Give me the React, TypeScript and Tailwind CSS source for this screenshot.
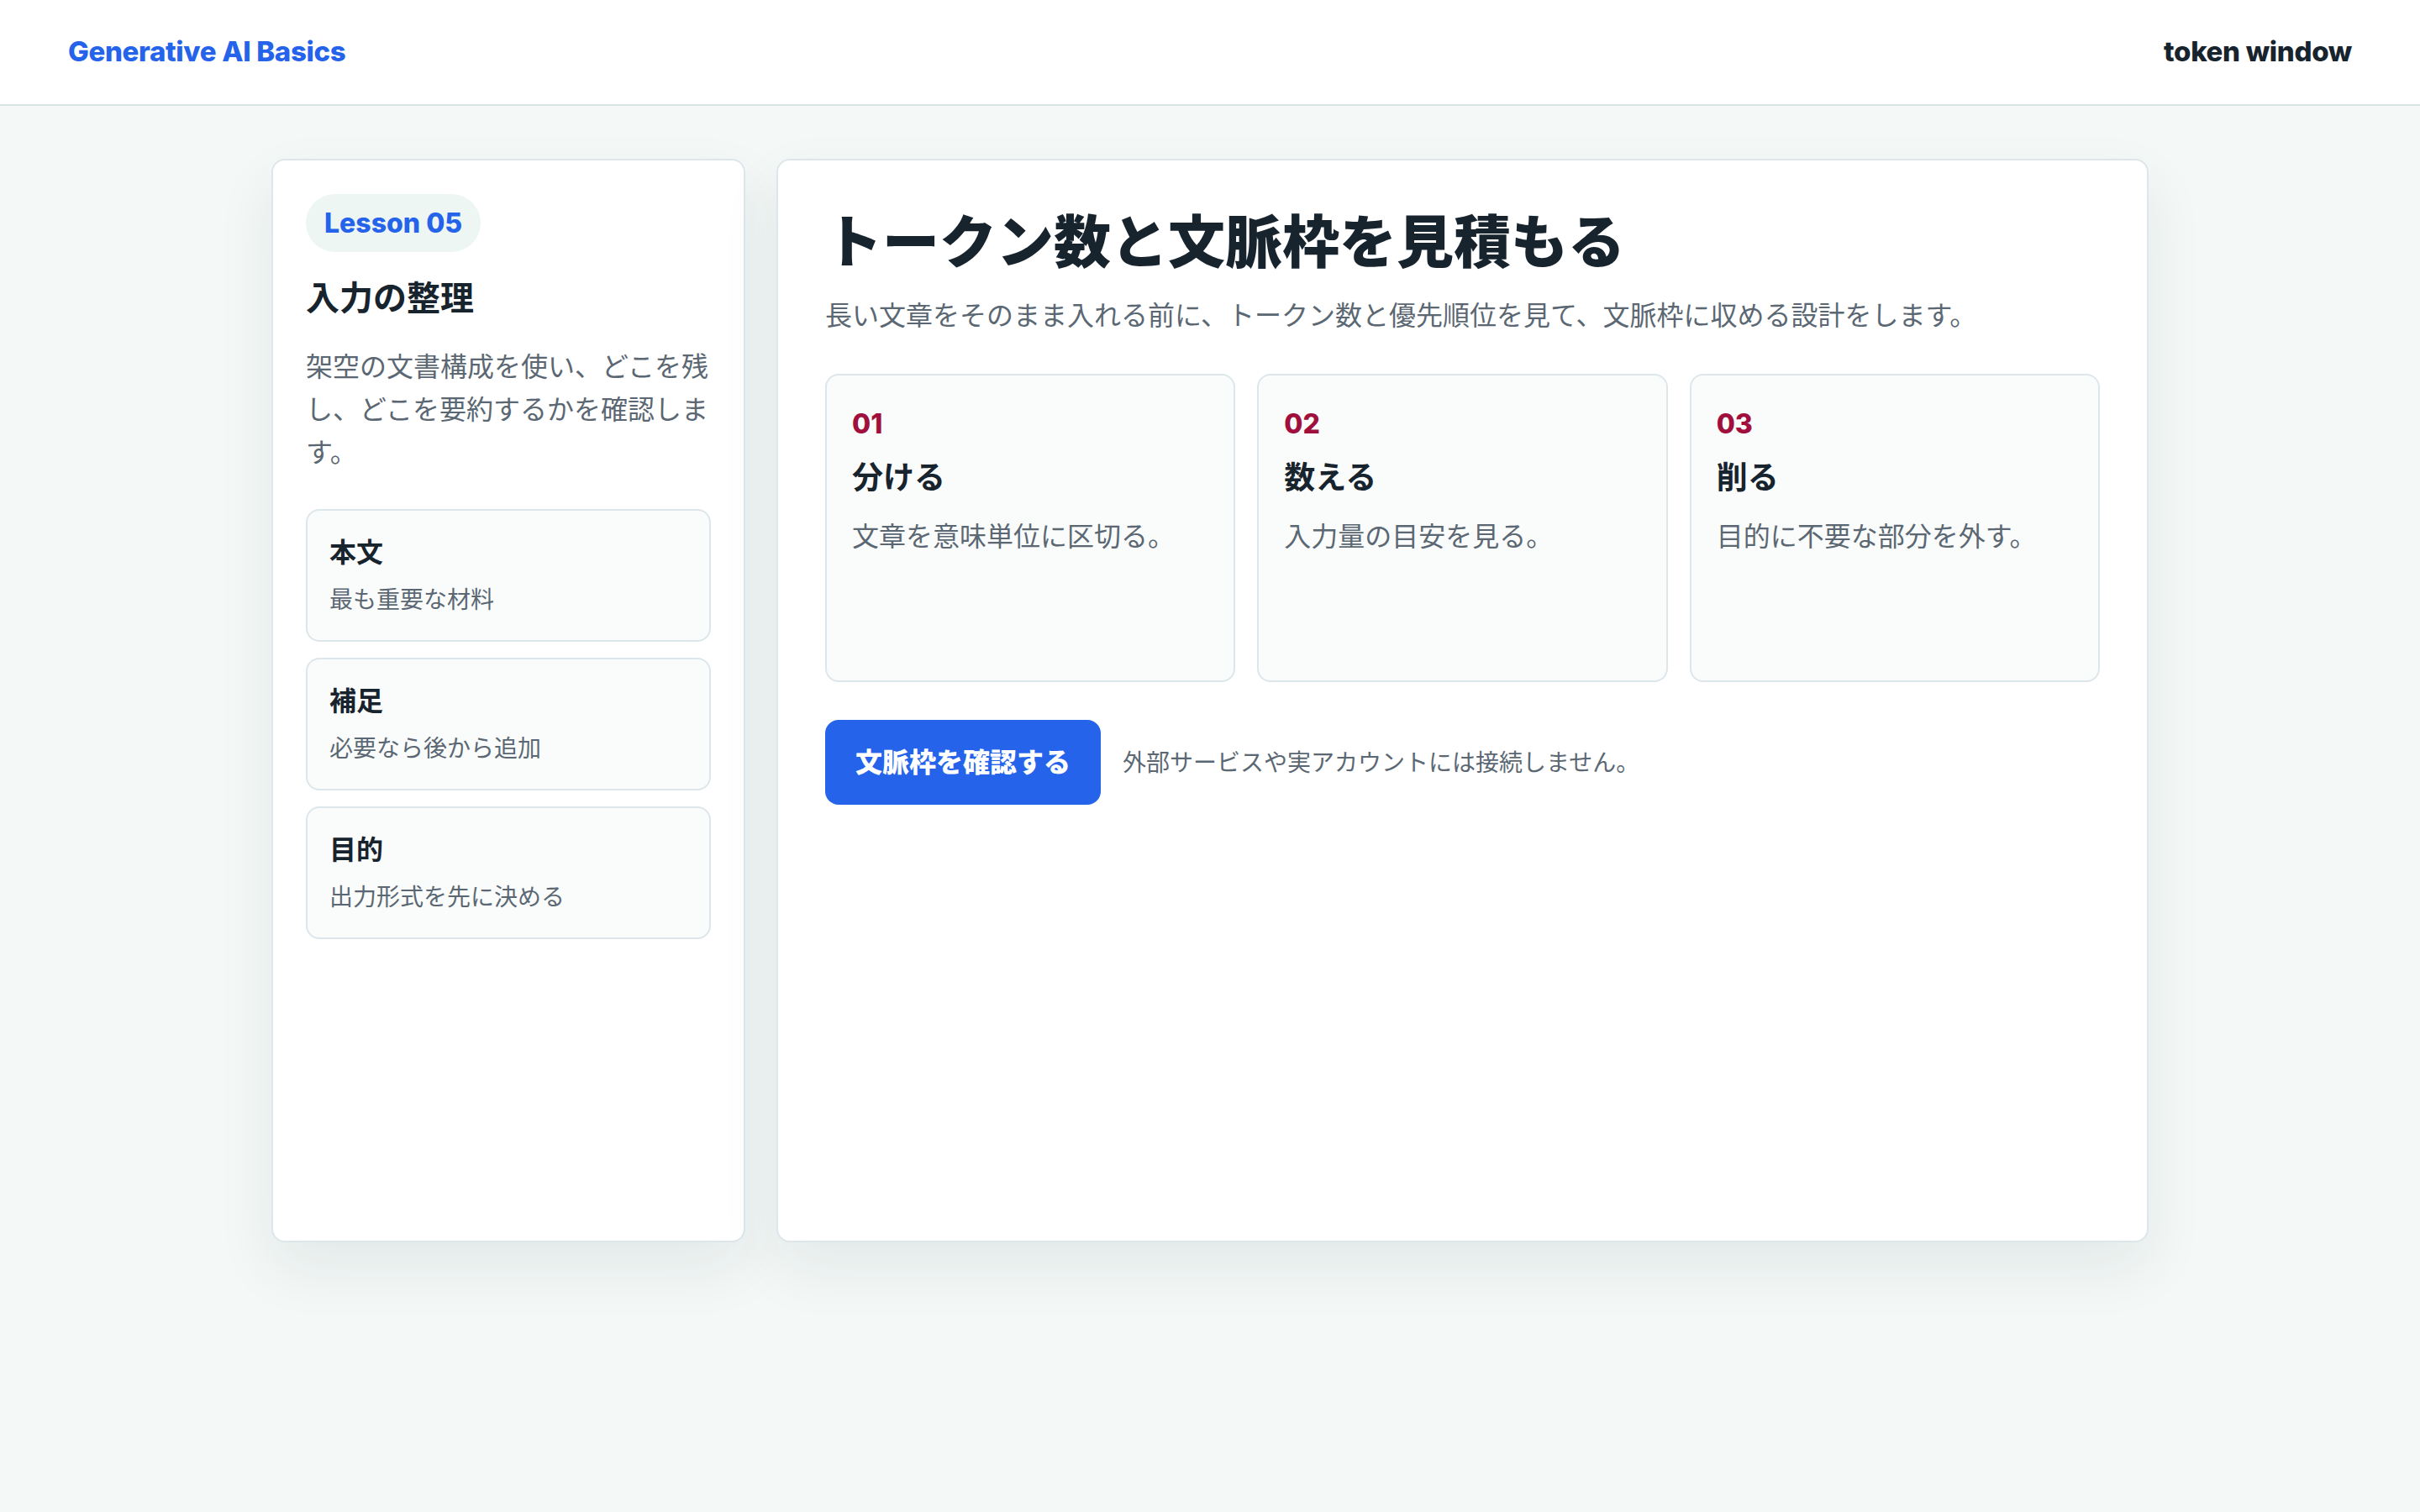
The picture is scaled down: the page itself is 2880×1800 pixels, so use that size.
const STEPS = [
  { no: '01', title: '分ける', text: '文章を意味単位に区切る。' },
  { no: '02', title: '数える', text: '入力量の目安を見る。' },
  { no: '03', title: '削る', text: '目的に不要な部分を外す。' },
];

const PARTS = [
  { title: '本文', text: '最も重要な材料' },
  { title: '補足', text: '必要なら後から追加' },
  { title: '目的', text: '出力形式を先に決める' },
];

const font = { fontFamily: 'Inter, "Noto Sans CJK JP", sans-serif' };

export default function App() {
  return (
    <div style={font} className="min-h-screen bg-[#f4f8f7] text-[#17232d]">
      <header className="h-[126px] bg-white border-b-2 border-[#d8e3e3] flex items-center justify-between px-[81px]">
        <div className="text-[33px] font-extrabold tracking-[-0.01em] text-[#2563eb]">Generative AI Basics</div>
        <div className="text-[33px] font-extrabold tracking-[-0.01em] text-[#17232d]">token window</div>
      </header>

      <main className="max-w-[2234px] mx-auto pt-[63px] pb-[60px] grid grid-cols-[564px_1fr] gap-[37px]">
        <aside className="h-[1290px] bg-white border-2 border-[#dde6ea] rounded-[16px] py-[40px] px-[39px] shadow-[0_30px_70px_rgba(30,60,60,0.08)]">
          <span className="inline-flex items-center h-[69px] px-[22px] rounded-full bg-[#edf6f3] text-[32px] font-extrabold text-[#2563eb]">
            Lesson 05
          </span>
          <h2 className="mt-[27px] text-[40px] leading-[56px] font-bold">入力の整理</h2>
          <p className="mt-[28px] text-[32px] leading-[51px] text-[#5b6873]">
            架空の文書構成を使い、どこを残し、どこを要約するかを確認します。
          </p>
          <div className="mt-[42px] flex flex-col gap-[19px]">
            {PARTS.map((p) => (
              <div key={p.title} className="h-[158px] bg-[#fafcfc] border-2 border-[#dde6ea] rounded-[16px] px-[26px] pt-[28px]">
                <div className="text-[32px] leading-[44px] font-bold">{p.title}</div>
                <div className="mt-[14px] text-[28px] leading-[40px] text-[#5b6873]">{p.text}</div>
              </div>
            ))}
          </div>
        </aside>

        <section className="h-[1290px] bg-white border-2 border-[#dde6ea] rounded-[16px] p-[56px] shadow-[0_30px_70px_rgba(30,60,60,0.08)]">
          <h1 className="text-[68px] leading-[82px] font-extrabold">トークン数と文脈枠を見積もる</h1>
          <p className="mt-[21px] text-[32px] leading-[51px] text-[#5b6873]">
            長い文章をそのまま入れる前に、トークン数と優先順位を見て、文脈枠に収める設計をします。
          </p>

          <div className="mt-[44px] grid grid-cols-3 gap-[26px]">
            {STEPS.map((s) => (
              <div key={s.no} className="h-[367px] bg-[#fafcfc] border-2 border-[#dde6ea] rounded-[16px] px-[30px] pt-[38px]">
                <div className="text-[32px] leading-[40px] font-extrabold text-[#a10f3d]">{s.no}</div>
                <div className="mt-[19px] text-[37px] leading-[50px] font-bold">{s.title}</div>
                <div className="mt-[19px] text-[32px] leading-[51px] text-[#5b6873]">{s.text}</div>
              </div>
            ))}
          </div>

          <div className="mt-[45px] flex items-center gap-[26px]">
            <button className="h-[101px] px-[36px] rounded-[16px] bg-[#2563eb] text-white text-[32px] font-extrabold">
              文脈枠を確認する
            </button>
            <span className="text-[28px] text-[#5b6873]">外部サービスや実アカウントには接続しません。</span>
          </div>
        </section>
      </main>
    </div>
  );
}
